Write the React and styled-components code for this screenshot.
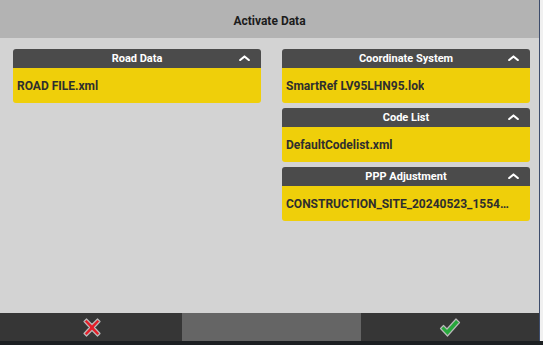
import React from "react";
import styled, { createGlobalStyle } from "styled-components";

const Global = createGlobalStyle`
  html, body { margin: 0; padding: 0; background: #f2f2f2; }
  body { font-family: Roboto, "Liberation Sans", sans-serif; }
  * { box-sizing: border-box; }
`;

const Screen = styled.div`
  width: 543px;
  height: 345px;
  display: flex;
  flex-direction: column;
  background: #f0f0f0;
  overflow: hidden;
`;

const Frame = styled.div`
  width: 540px;
  height: 341px;
  display: flex;
  flex-direction: column;
  border-right: 1px solid #3d4c6b;
`;

const TitleBar = styled.div`
  height: 38px;
  flex: none;
  background: #b3b3b3;
  display: flex;
  align-items: center;
  justify-content: center;
  padding-top: 3px;
  font-size: 12px;
  font-weight: 700;
  color: #1c1c1c;
`;

const Body = styled.div`
  flex: 1;
  background: #d3d3d3;
  display: grid;
  grid-template-columns: 248px 248px;
  column-gap: 21px;
  padding: 11px 9px 0 13px;
  align-content: start;
`;

const Column = styled.div`
  display: flex;
  flex-direction: column;
  gap: 5px;
`;

const Card = styled.div`
  border-radius: 3px;
  overflow: hidden;
  display: flex;
  flex-direction: column;
`;

const CardHeader = styled.div`
  position: relative;
  height: 19px;
  background: #4b4b4b;
  color: #ffffff;
  font-size: 11px;
  font-weight: 700;
  display: flex;
  align-items: center;
  justify-content: center;
`;

const Chevron = styled.svg`
  position: absolute;
  right: 11px;
  top: 6px;
`;

const CardBody = styled.div`
  height: 35px;
  background: #efcf0a;
  color: #2e2e2e;
  font-size: 12px;
  font-weight: 700;
  display: flex;
  align-items: center;
  padding: 1px 19px 0 4px;
`;

const Value = styled.span`
  white-space: nowrap;
  overflow: hidden;
  text-overflow: ellipsis;
`;

const BottomBar = styled.div`
  height: 28px;
  flex: none;
  background: #363636;
  display: grid;
  grid-template-columns: 182px 179px 1fr;
`;

const BarButton = styled.div`
  display: flex;
  align-items: center;
  justify-content: center;
  background: ${(p) => (p.$muted ? "#656565" : "transparent")};
  padding-left: ${(p) => p.$shift || 0}px;
`;

const Taskbar = styled.div`
  height: 4px;
  background: #1c1f22;
`;

const Up = () => (
  <Chevron width="11" height="6" viewBox="0 0 11 6">
    <path d="M1.2 5 L5.5 1.5 L9.8 5" fill="none" stroke="#fff" strokeWidth="2.2" strokeLinecap="round" strokeLinejoin="round" />
  </Chevron>
);

const Item = ({ title, value }) => (
  <Card>
    <CardHeader>
      {title}
      <Up />
    </CardHeader>
    <CardBody>
      <Value>{value}</Value>
    </CardBody>
  </Card>
);

const CrossIcon = () => (
  <svg width="22" height="23" viewBox="0 0 22 23">
    <path
      d="M3 5.5 L5.5 3 L11 8.5 L16.5 3 L19 5.5 L13.5 11.5 L19 17.5 L16.5 20 L11 14.5 L5.5 20 L3 17.5 L8.5 11.5 Z"
      fill="#e51f2a"
      stroke="#b9b9b9"
      strokeWidth="1.2"
      strokeLinejoin="round"
    />
  </svg>
);

const CheckIcon = () => (
  <svg width="22" height="22" viewBox="0 0 22 22">
    <path
      d="M1.5 12.5 L4.5 9.5 L8 13 L17 3 L20.5 6.5 L8.5 20 Z"
      fill="#27a83c"
      stroke="#b9b9b9"
      strokeWidth="1.2"
      strokeLinejoin="round"
    />
  </svg>
);

export default function App() {
  return (
    <Screen>
      <Global />
      <Frame>
        <TitleBar>Activate Data</TitleBar>
        <Body>
          <Column>
            <Item title="Road Data" value="ROAD FILE.xml" />
          </Column>
          <Column>
            <Item title="Coordinate System" value="SmartRef LV95LHN95.lok" />
            <Item title="Code List" value="DefaultCodelist.xml" />
            <Item title="PPP Adjustment" value="CONSTRUCTION_SITE_20240523_155412.ppp" />
          </Column>
        </Body>
        <BottomBar>
          <BarButton $shift={2}>
            <CrossIcon />
          </BarButton>
          <BarButton $muted />
          <BarButton $shift={0}>
            <CheckIcon />
          </BarButton>
        </BottomBar>
      </Frame>
      <Taskbar />
    </Screen>
  );
}
